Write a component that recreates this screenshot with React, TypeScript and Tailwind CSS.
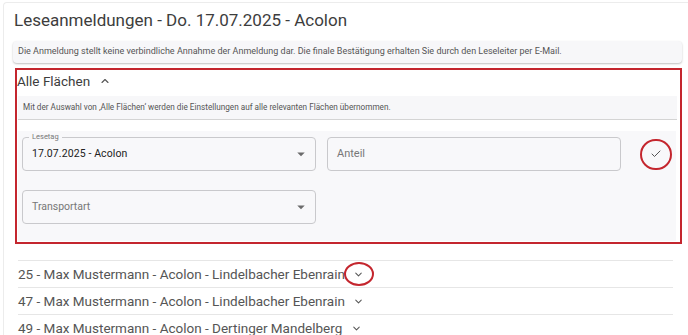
import { Check, ChevronDown, ChevronUp } from "lucide-react";

const rows = [
  { label: "25 - Max Mustermann - Acolon - Lindelbacher Ebenrain", marked: true },
  { label: "47 - Max Mustermann - Acolon - Lindelbacher Ebenrain", marked: false },
  { label: "49 - Max Mustermann - Acolon - Dertinger Mandelberg", marked: false },
];

function DropArrow() {
  return (
    <svg viewBox="0 0 24 24" className="h-[18px] w-[18px] fill-[#6b6b6b]">
      <path d="M7 10l5 5 5-5z" />
    </svg>
  );
}

function SelectField({ label, value, placeholder }: { label?: string; value?: string; placeholder: string }) {
  return (
    <div className="relative flex h-[34px] w-[294px] shrink-0 items-center justify-between rounded border border-[#c9c9cc] bg-[#f8f8fa] pl-[9px] pr-[5px]">
      {label && (
        <span className="absolute -top-[6px] left-[6px] bg-[#f8f8fa] px-[3px] text-[7.5px] leading-[10px] text-[#777]">
          {label}
        </span>
      )}
      {value ? (
        <span className="text-[10.5px] tracking-[0.1px] text-[#222]">{value}</span>
      ) : (
        <span className="text-[10.5px] text-[#777]">{placeholder}</span>
      )}
      <DropArrow />
    </div>
  );
}

export default function App() {
  return (
    <div className="h-[335px] w-[688px] overflow-hidden bg-white pl-[3px] pt-[2px] font-['Roboto',sans-serif]">
      <div className="h-full rounded-tl border-l border-t border-[#ececec] pl-[9px] pr-[6px]">
        <h1 className="mt-[5px] h-[24px] pl-px text-[17px] leading-[24px] text-[#3d3d3d]">
          Leseanmeldungen - Do. 17.07.2025 - Acolon
        </h1>
        <div className="mt-[9px] flex h-[22px] items-center rounded bg-[#f7f7f9] px-[5px] text-[9px] text-[#555] shadow-[0_1px_2px_rgba(0,0,0,0.25)]">
          Die Anmeldung stellt keine verbindliche Annahme der Anmeldung dar. Die finale Bestätigung erhalten Sie durch den Leseleiter per E-Mail.
        </div>

        <div className="ml-[2px] mt-[5px] w-[667px] border-2 border-[#c4262e] pb-[1px]">
          <div className="flex h-[22px] items-center gap-[9px]">
            <span className="text-[13.5px] leading-[20px] text-[#3d3d3d]">Alle Flächen</span>
            <ChevronUp className="h-[12px] w-[12px] text-[#555]" strokeWidth={2.2} />
          </div>
          <div className="ml-px mr-[3px] mt-[4px] flex h-[24px] items-center border-b border-[#d4d4d4] bg-[#f7f7f9] px-[5px] text-[8.2px] text-[#555]">
            Mit der Auswahl von ‚Alle Flächen‘ werden die Einstellungen auf alle relevanten Flächen übernommen.
          </div>
          <div className="ml-px mr-[4px] mt-[11px] flex flex-col gap-[19px] bg-[#f8f8fa] pb-[17px] pl-[4px] pt-[6px]">
            <div className="flex items-center gap-[11px]">
              <SelectField label="Lesetag" value="17.07.2025 - Acolon" placeholder="Lesetag" />
              <div className="flex h-[34px] w-[294px] shrink-0 items-center rounded border border-[#c9c9cc] bg-[#f8f8fa] pl-[9px] text-[11px] text-[#777]">
                Anteil
              </div>
              <div className="relative ml-[8px] flex h-[31px] w-[32px] shrink-0 items-center justify-center">
                <Check className="h-[12px] w-[12px] text-[#555]" strokeWidth={2} />
                <span className="absolute inset-0 rounded-full border-2 border-[#c4262e]" />
              </div>
            </div>
            <SelectField placeholder="Transportart" />
          </div>
        </div>

        <div className="ml-[5px] mr-[9px] mt-[16px]">
          {rows.map((row) => (
            <div key={row.label} className="flex h-[27px] items-center border-t border-[#e6e6e6] text-[13.5px] text-[#555]">
              <span>{row.label}</span>
              <span className="relative ml-[7px] flex h-[22px] w-[14px] items-center justify-center">
                <ChevronDown className="h-[11px] w-[11px] text-[#555]" strokeWidth={2.2} />
                {row.marked && (
                  <span className="absolute -left-[8px] -right-[8px] -top-[1px] -bottom-[1px] rounded-[50%] border-2 border-[#c4262e]" />
                )}
              </span>
            </div>
          ))}
        </div>
      </div>
    </div>
  );
}
